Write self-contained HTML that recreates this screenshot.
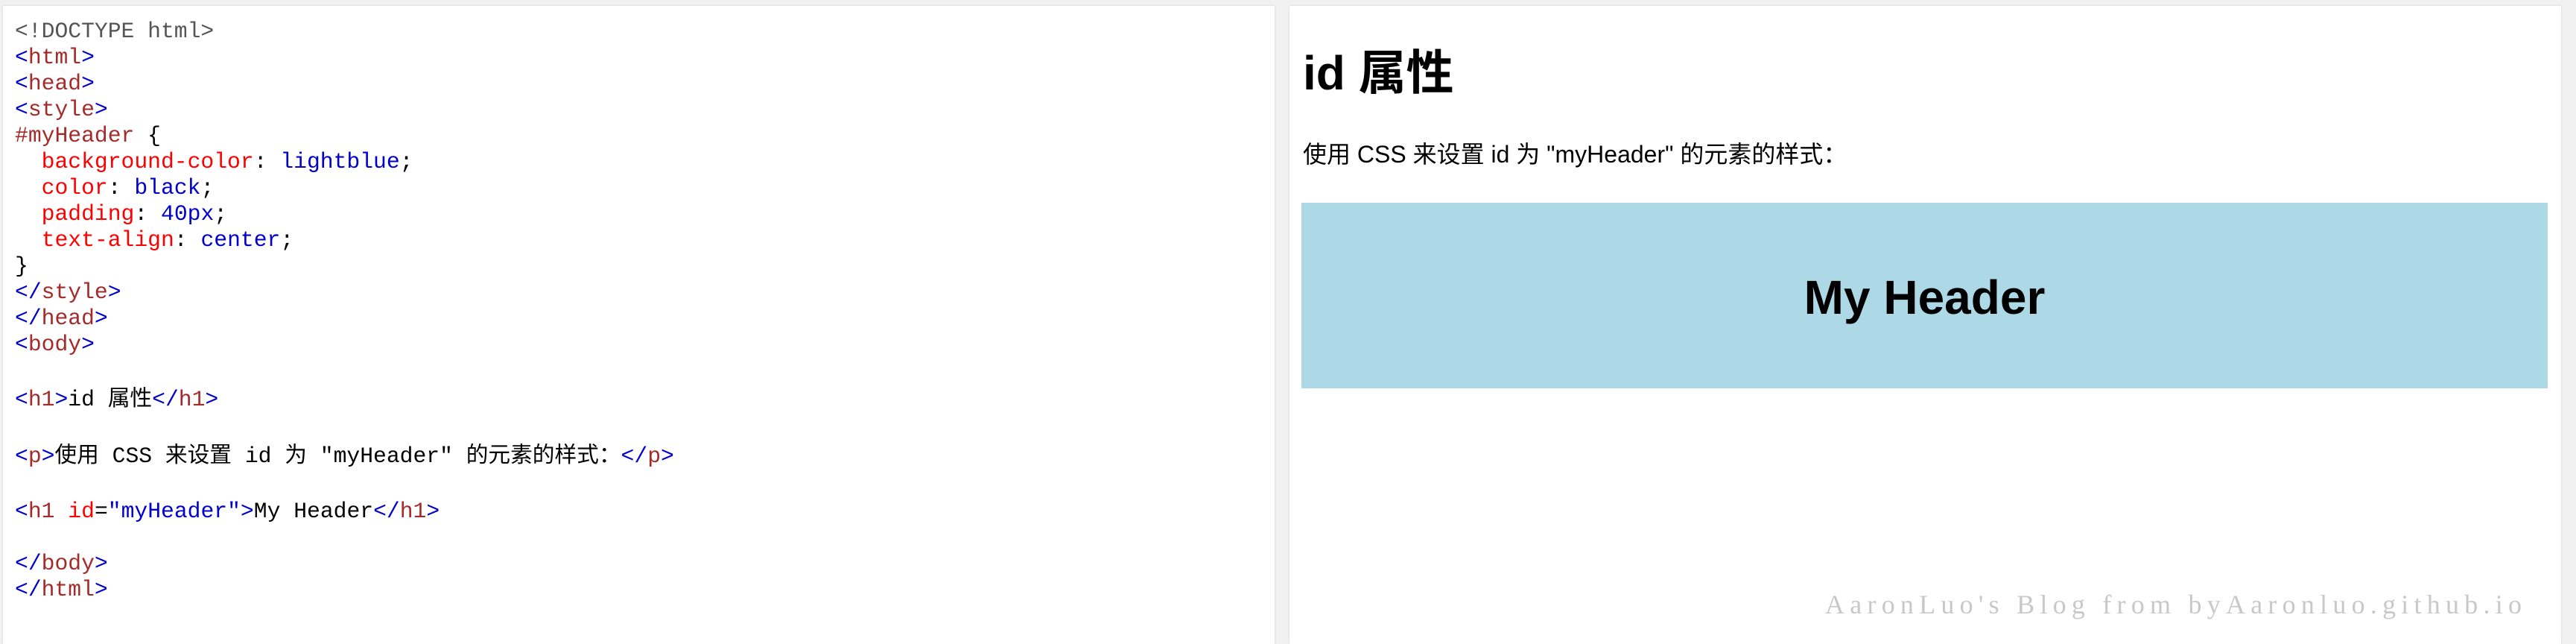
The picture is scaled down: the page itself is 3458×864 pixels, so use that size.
<!DOCTYPE html>
<html><head><meta charset="utf-8">
<style>
html,body{margin:0;padding:0;}
body{width:3458px;height:864px;background:#f1f1f1;position:relative;overflow:hidden;}
.panel{position:absolute;top:8px;bottom:0;background:#fff;}
#left{left:4px;width:1707px;box-shadow:0 0 3px rgba(0,0,0,.12);}
#right{left:1731px;width:1707px;box-shadow:0 0 3px rgba(0,0,0,.12);}
.ln{position:absolute;left:20px;height:35px;line-height:35px;white-space:pre;font-family:"Liberation Mono","Noto Sans CJK SC",monospace;font-size:29.7px;color:#000;}
.t{color:#a52a2a}.b{color:#0000cd}.r{color:#ff0000}.v{color:#0000cd}.g{color:#555}
.rs{position:absolute;font-family:"Liberation Sans","Noto Sans CJK SC",sans-serif;color:#000;white-space:nowrap;}
</style></head><body>
<div class="panel" id="left"></div>
<div class="panel" id="right"></div>
<div class="ln g" style="top:25px">&lt;!DOCTYPE html&gt;</div>
<div class="ln" style="top:60px"><span class="b">&lt;</span><span class="t">html</span><span class="b">&gt;</span></div>
<div class="ln" style="top:95px"><span class="b">&lt;</span><span class="t">head</span><span class="b">&gt;</span></div>
<div class="ln" style="top:130px"><span class="b">&lt;</span><span class="t">style</span><span class="b">&gt;</span></div>
<div class="ln" style="top:165px"><span class="t">#myHeader</span> {</div>
<div class="ln" style="top:200px">  <span class="r">background-color</span>: <span class="v">lightblue</span>;</div>
<div class="ln" style="top:235px">  <span class="r">color</span>: <span class="v">black</span>;</div>
<div class="ln" style="top:270px">  <span class="r">padding</span>: <span class="v">40px</span>;</div>
<div class="ln" style="top:305px">  <span class="r">text-align</span>: <span class="v">center</span>;</div>
<div class="ln" style="top:340px">}</div>
<div class="ln" style="top:375px"><span class="b">&lt;/</span><span class="t">style</span><span class="b">&gt;</span></div>
<div class="ln" style="top:410px"><span class="b">&lt;/</span><span class="t">head</span><span class="b">&gt;</span></div>
<div class="ln" style="top:445px"><span class="b">&lt;</span><span class="t">body</span><span class="b">&gt;</span></div>
<div class="ln" style="top:519px"><span class="b">&lt;</span><span class="t">h1</span><span class="b">&gt;</span>id 属性<span class="b">&lt;/</span><span class="t">h1</span><span class="b">&gt;</span></div>
<div class="ln" style="top:595px"><span class="b">&lt;</span><span class="t">p</span><span class="b">&gt;</span>使用 CSS 来设置 id 为 "myHeader" 的元素的样式：<span class="b">&lt;/</span><span class="t">p</span><span class="b">&gt;</span></div>
<div class="ln" style="top:669px"><span class="b">&lt;</span><span class="t">h1</span> <span class="r">id</span>=<span class="v">"myHeader"</span><span class="b">&gt;</span>My Header<span class="b">&lt;/</span><span class="t">h1</span><span class="b">&gt;</span></div>
<div class="ln" style="top:739px"><span class="b">&lt;/</span><span class="t">body</span><span class="b">&gt;</span></div>
<div class="ln" style="top:774px"><span class="b">&lt;/</span><span class="t">html</span><span class="b">&gt;</span></div>

<div class="rs" style="left:1749px;top:66px;font-size:64px;line-height:64px;font-weight:bold;">id 属性</div>
<div class="rs" style="left:1749px;top:191px;font-size:32px;line-height:32px;">使用 CSS 来设置 id 为 "myHeader" 的元素的样式：</div>
<div style="position:absolute;left:1747px;top:272px;width:1673px;height:249px;background:#add8e6;"></div>
<div class="rs" style="left:1747px;width:1673px;text-align:center;top:367px;font-size:64px;line-height:64px;font-weight:bold;">My Header</div>
<svg style="position:absolute;left:0;top:0" width="3458" height="864"><text x="2450" y="823" font-family="Liberation Serif, serif" font-size="36" fill="#c8c8c8" textLength="935" lengthAdjust="spacing">AaronLuo's Blog from byAaronluo.github.io</text></svg>
</body></html>
